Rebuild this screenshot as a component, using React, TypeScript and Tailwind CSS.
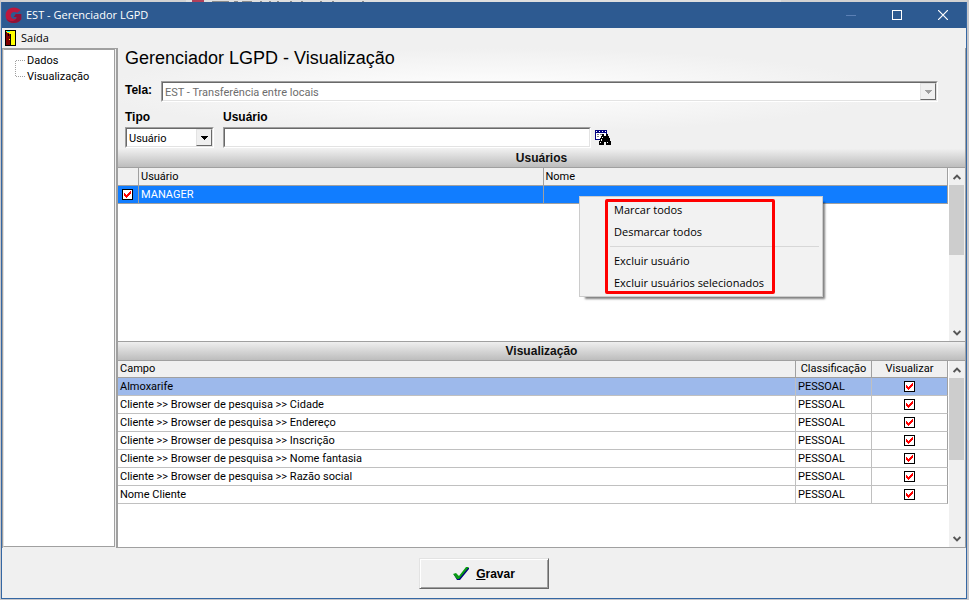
import { useState } from "react";
import type { ReactNode } from "react";

const campos = [
  "Almoxarife",
  "Cliente >> Browser de pesquisa >> Cidade",
  "Cliente >> Browser de pesquisa >> Endereço",
  "Cliente >> Browser de pesquisa >> Inscrição",
  "Cliente >> Browser de pesquisa >> Nome fantasia",
  "Cliente >> Browser de pesquisa >> Razão social",
  "Nome Cliente",
];

// Two-tone sunken frame used around every field
function Sunken({ className, children }: { className?: string; children: ReactNode }) {
  return (
    <div className={`border border-t-[#a0a0a0] border-l-[#a0a0a0] border-r-white border-b-white ${className ?? ""}`}>
      <div className="relative flex h-[19px] border border-t-[#696969] border-l-[#696969] border-r-[#e3e3e3] border-b-[#e3e3e3] bg-white">
        {children}
      </div>
    </div>
  );
}

function DropArrow({ disabled }: { disabled?: boolean }) {
  return (
    <span className="pointer-events-none absolute top-0 right-0 flex h-[17px] w-4 items-center justify-center border border-t-[#e3e3e3] border-l-[#e3e3e3] border-r-[#696969] border-b-[#696969] bg-[#f0f0f0]">
      <svg width="7" height="4" viewBox="0 0 7 4" shapeRendering="crispEdges">
        <path d="M0 0h7v1h-1v1h-1v1h-1v1h-1v-1h-1v-1h-1v-1h-1z" fill={disabled ? "#a0a0a0" : "#000"} />
      </svg>
    </span>
  );
}

function Check({ label }: { label: string }) {
  const [checked, setChecked] = useState(true);
  return (
    <label className="relative mx-auto block size-[11px]">
      <input
        type="checkbox"
        aria-label={label}
        checked={checked}
        onChange={() => setChecked(!checked)}
        className="block size-[11px] appearance-none border border-black bg-white"
      />
      {checked && (
        <svg className="pointer-events-none absolute top-0 left-0" width="11" height="11" shapeRendering="crispEdges">
          <path d="M2 4h1v1h1v1h1v-1h1v-1h1v-1h1v-1h1v3h-1v1h-1v1h-1v1h-1v1h-1v-1h-1v-1h-1z" fill="#ff0000" />
        </svg>
      )}
    </label>
  );
}

function Chevron({ down }: { down?: boolean }) {
  return (
    <svg width="8" height="6" viewBox="0 0 8 6" className={down ? "rotate-180" : ""}>
      <path d="M0.6 5L4 1.6L7.4 5" fill="none" stroke="#555" strokeWidth="2" />
    </svg>
  );
}

function ScrollBar({ thumb }: { thumb: string }) {
  return (
    <div className="ml-px flex w-4 shrink-0 flex-col bg-[#f0f0f0]">
      <button aria-label="Rolar para cima" className="flex h-[17px] items-center justify-center">
        <Chevron />
      </button>
      <div className="flex-1">
        <div className={`w-[15px] bg-[#cdcdcd] ${thumb}`} />
      </div>
      <button aria-label="Rolar para baixo" className="flex h-[17px] items-center justify-center">
        <Chevron down />
      </button>
    </div>
  );
}

function SectionBar({ children }: { children: ReactNode }) {
  return (
    <h2 className="h-[19px] shrink-0 border-b border-[#a0a0a0] bg-linear-to-b from-[#efefef] to-[#bdbdbd] text-center font-['Liberation_Sans',sans-serif] text-xs leading-[19px] font-bold text-[#101010]">
      {children}
    </h2>
  );
}

function ContextMenu() {
  const item = "block h-[22px] w-full pl-[34px] text-left leading-[22px] hover:bg-[#91c9f7]";
  return (
    <div className="absolute top-7 left-[461px] w-[244px] border border-[#ccc] bg-[#f2f2f2] py-[2px] font-['Open_Sans',sans-serif] text-[11px] whitespace-nowrap shadow-[4px_4px_2px_-2px_rgba(0,0,0,0.5)]">
      <button className={item}>Marcar todos</button>
      <button className={item}>Desmarcar todos</button>
      <hr className="mt-[3px] mr-[3px] mb-[3px] ml-[30px] border-[#d7d7d7]" />
      <button className={item}>Excluir usuário</button>
      <button className={item}>Excluir usuários selecionados</button>
      <div className="pointer-events-none absolute top-[2px] left-[25px] h-[95px] w-[170px] rounded-xs border-3 border-[#f00]" />
    </div>
  );
}

function TitleBar() {
  return (
    <header className="flex h-[26px] shrink-0 items-center bg-[#2d5a91] pl-[3px] font-['Open_Sans',sans-serif] text-white">
      <svg width="17" height="17" viewBox="0 0 17 17">
        <path d="M15.5 3.2L12.2 5.8C9.6 4 6 5 5.700 8.200c0 3.400 3.600 4.600 5.800 3V10H8.800l2-3h5.400v5.200C12.500 17.800 1 17.400 0.600 8.700C0.500 0.500 10.500-1.800 15.500 3.200z" fill="#bd173c" />
        <path d="M16.200 7v5.200C12.500 17.800 3.600 17 1.300 11.500c4 4 8.400 2.800 10.200-0.300V10H8.800l2-3z" fill="#8d1238" />
      </svg>
      <h1 className="ml-1 flex-1 pb-[2px] text-[11px]">EST - Gerenciador LGPD</h1>
      <button aria-label="Minimizar" className="flex w-[46px] justify-center">
        <svg width="10" height="10" shapeRendering="crispEdges"><path d="M0 5.500h10" stroke="#5b80b5" /></svg>
      </button>
      <button aria-label="Maximizar" className="flex w-[46px] justify-center">
        <svg width="10" height="10" shapeRendering="crispEdges"><path d="M.5 .5h9v9h-9z" stroke="#fff" fill="none" /></svg>
      </button>
      <button aria-label="Fechar" className="flex w-[46px] justify-center">
        <svg width="10" height="10"><path d="M0 0l10 10M10 0L0 10" stroke="#fff" strokeWidth="1.200" /></svg>
      </button>
    </header>
  );
}

function Sidebar() {
  return (
    <nav className="w-[114px] shrink-0 border-t border-l border-[#a0a0a0] pb-px">
      <div className="mr-px h-full border border-[#a0a0a0] border-l-[#e3e3e3] bg-white">
        <div className="relative pt-[3px]">
          <svg className="absolute top-[3px] left-[11px]" width="10" height="28" shapeRendering="crispEdges">
            <path d="M.5 7.500H10M.5 8v16M.5 23.500H10" stroke="#a0a0a0" strokeDasharray="1 1" fill="none" />
          </svg>
          <ul className="pl-[23px] leading-4">
            <li><a href="#dados">Dados</a></li>
            <li><a href="#visualizacao">Visualização</a></li>
          </ul>
        </div>
      </div>
    </nav>
  );
}

function Filters() {
  const label = "font-['Liberation_Sans',sans-serif] text-xs font-bold";
  return (
    <section className="h-[101px] shrink-0 bg-[#f0f0f0] bg-[radial-gradient(ellipse_46%_42%_at_44%_42%,#ffffff,#f0f0f0)] pl-[7px]">
      <h2 className="h-[33px] font-['Liberation_Sans',sans-serif] text-lg leading-5">Gerenciador LGPD - Visualização</h2>
      <div className="flex h-[29px] items-start pr-[27px]">
        <label htmlFor="tela" className={`w-9 leading-[18px] ${label}`}>Tela:</label>
        <Sunken className="flex-1">
          <select id="tela" disabled className="w-full appearance-none pt-px pl-[2px] text-[#6d6d6d] opacity-100">
            <option>EST - Transferência entre locais</option>
          </select>
          <DropArrow disabled />
        </Sunken>
      </div>
      <div className="flex">
        <div className="mr-[9px] w-[89px]">
          <label htmlFor="tipo" className={`block h-[17px] leading-[14px] ${label}`}>Tipo</label>
          <Sunken>
            <select id="tipo" className="w-full appearance-none pt-px pl-[2px]">
              <option>Usuário</option>
            </select>
            <DropArrow />
          </Sunken>
        </div>
        <div className="w-[368px]">
          <label htmlFor="usuario" className={`block h-[17px] leading-[14px] ${label}`}>Usuário</label>
          <Sunken>
            <input id="usuario" type="text" className="w-full px-1 outline-none" />
          </Sunken>
        </div>
        <button aria-label="Pesquisar" className="mt-4 ml-1">
          <svg width="16" height="16" viewBox="0 0 16 16" shapeRendering="crispEdges">
            <path d="M0 1h12v10H0z" fill="#000080" />
            <path d="M1 4h10v6H1z" fill="#fff" />
            <path d="M1 2h1v1H1zM4 2h1v1H4zM7 2h1v1H7zM10 2h1v1h-1z" fill="#fff" />
            <path d="M2 5h2v1H2zM5 5h2v1H5zM2 7h2v1H2z" fill="#808080" />
            <path d="M7 5h2v2h2V5h2v2h1v2h1v3h1v4h-5v-3h-2v3H4v-4h1V9h1V7h1z" fill="#000" />
            <path d="M7 8h1v1H7zM6 10h1v2H6zM5 13h1v1H5zM12 13h1v1h-1z" fill="#fff" />
          </svg>
        </button>
      </div>
    </section>
  );
}

function UsersGrid() {
  return (
    <div className="relative flex h-[174px] shrink-0 border-b border-[#a0a0a0] bg-white">
      <div className="flex-1">
        <table className="w-full table-fixed border-separate border-spacing-0 leading-4">
          <thead>
            <tr className="h-[18px] bg-[#f0f0f0]">
              <th className="w-[21px] border-r border-b border-[#a0a0a0]" />
              <th className="border-r border-b border-[#a0a0a0] pt-px pl-[2px] text-left font-normal">Usuário</th>
              <th className="border-r border-b border-[#a0a0a0] pt-px pl-[2px] text-left font-normal">Nome</th>
            </tr>
          </thead>
          <tbody>
            <tr className="h-[18px] bg-[#117dff] text-white">
              <td className="border-r border-b border-[#a0a0a0] pr-px"><Check label="MANAGER" /></td>
              <td className="border-r border-b border-[#a0a0a0] pt-px pl-[2px]">MANAGER</td>
              <td className="border-r border-b border-[#a0a0a0]" />
            </tr>
          </tbody>
        </table>
      </div>
      <ScrollBar thumb="h-[70px]" />
      <ContextMenu />
    </div>
  );
}

function FieldsGrid() {
  return (
    <div className="flex flex-1 border-b border-[#a0a0a0] bg-white">
      <div className="flex-1">
        <table className="w-full table-fixed border-separate border-spacing-0 leading-4">
          <thead>
            <tr className="h-[17px] bg-[#f0f0f0]">
              <th className="border-r border-b border-[#a0a0a0] pl-[2px] text-left font-normal">Campo</th>
              <th className="w-[76px] border-r border-b border-[#a0a0a0] font-normal">Classificação</th>
              <th className="w-[76px] border-r border-b border-[#a0a0a0] font-normal">Visualizar</th>
            </tr>
          </thead>
          <tbody>
            {campos.map((campo, i) => (
              <tr key={campo} className={`h-[18px] ${i === 0 ? "bg-[#9db9eb]" : ""}`}>
                <td className="border-r border-b border-[#c0c0c0] pt-px pl-[2px]">{campo}</td>
                <td className="border-r border-b border-[#c0c0c0] pt-px pl-[2px]">PESSOAL</td>
                <td className="border-b border-[#c0c0c0] border-r border-r-[#a0a0a0]"><Check label={campo} /></td>
              </tr>
            ))}
          </tbody>
        </table>
      </div>
      <ScrollBar thumb="h-[82px]" />
    </div>
  );
}

export default function App() {
  return (
    <div className="flex h-screen min-h-[560px] flex-col bg-[#c8c8cc] pr-[2px] pb-px pl-px font-['Roboto',sans-serif] text-[11px] leading-[17px] text-black">
      {/* sliver of the window behind */}
      <div className="flex h-[2px] shrink-0">
        <div className="w-[185px] bg-[#d2d2d2]" />
        <div className="flex w-[595px] bg-[#dfdfdf] pl-[6px]">
          <div className="w-3 bg-[#b0405a]" />
          <svg className="ml-2" width="160" height="2" shapeRendering="crispEdges">
            <path d="M0 1h17M22 1h4M30 1h10M48 1h2M57 1h2M65 1h2M78 1h2M89 1h2M108 1h2M120 1h2M150 1h2" stroke="#8a8a8a" />
          </svg>
        </div>
        <div className="flex-1 bg-[#d2d2d2]" />
      </div>
      <div className="flex min-h-0 flex-1 flex-col border border-t-0 border-[#3567a3] bg-[#f0f0f0]">
        <TitleBar />
        <div className="flex h-5 shrink-0 items-center pl-[3px] font-['Open_Sans',sans-serif]">
          <button className="flex items-center">
            <svg width="11" height="16" viewBox="0 0 11 16" shapeRendering="crispEdges">
              <path d="M0 0h11v16H0z" fill="#000" />
              <path d="M1 1h9v14H1z" fill="#ff0" />
              <path d="M1 2l4 2v11H1z" fill="#800000" />
              <path d="M5 4h1v11H5zM3 4h1v2H3z" fill="#000" />
              <path d="M2 1h3v1H2z" fill="#0ff" />
              <path d="M4 9h1v1H4z" fill="#ff0" />
            </svg>
            <span className="ml-[5px] pb-[2px]">Saída</span>
          </button>
        </div>
        <div className="flex min-h-0 flex-1">
          <Sidebar />
          <main className="flex min-w-0 flex-1 flex-col border-r border-l-2 border-[#a0a0a0]">
            <Filters />
            <SectionBar>Usuários</SectionBar>
            <UsersGrid />
            <SectionBar>Visualização</SectionBar>
            <FieldsGrid />
          </main>
        </div>
        <footer className="flex h-[50px] shrink-0 justify-center pt-[10px]">
          <button className="flex h-[31px] w-[130px] items-center justify-center gap-[6px] border border-t-[#e3e3e3] border-l-[#e3e3e3] border-r-[#696969] border-b-[#696969] bg-[#f0f0f0] font-['Liberation_Sans',sans-serif] text-xs font-bold shadow-[inset_1px_1px_0_#fff,inset_-1px_-1px_0_#a0a0a0]">
            <svg width="17" height="15" viewBox="0 0 17 15">
              <path d="M1 9l2-1 3 3 8-9 2 0v1L7 14H4z" fill="#000080" />
              <path d="M0 8l3-1 3 3 7-9h3L6 13H4z" fill="#0a9a14" />
            </svg>
            <span><u>G</u>ravar</span>
          </button>
        </footer>
      </div>
    </div>
  );
}
